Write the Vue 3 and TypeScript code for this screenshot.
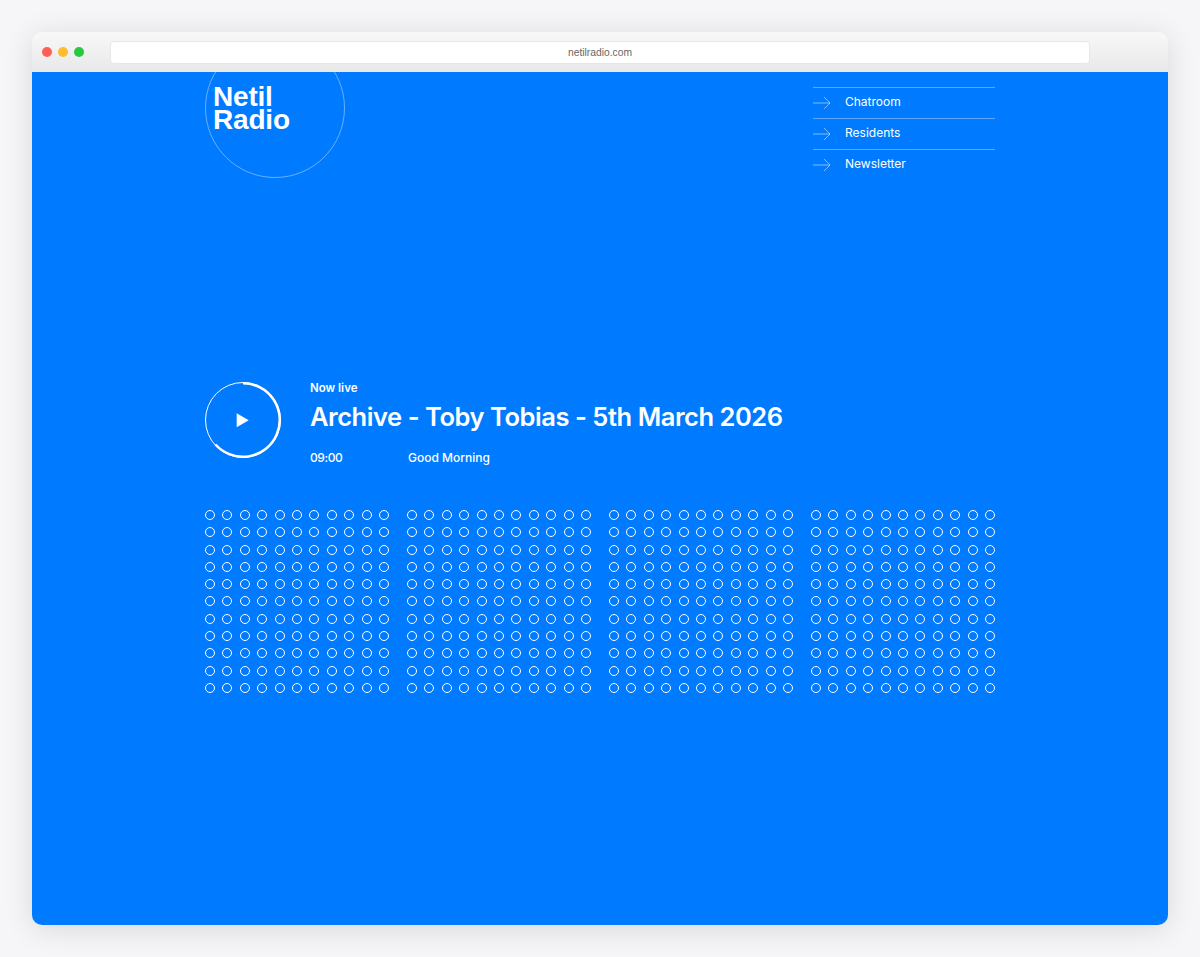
<script setup lang="ts">
const links: string[] = ['Chatroom', 'Residents', 'Newsletter']
const groups: number[] = [0, 1, 2, 3]
const dots: number[] = Array.from({ length: 121 }, (_, i) => i)
</script>

<template>
  <div class="stage">
    <div class="window">
      <div class="chrome">
        <div class="lights">
          <span class="light red"></span>
          <span class="light amber"></span>
          <span class="light green"></span>
        </div>
        <div class="address">netilradio.com</div>
      </div>
      <main class="site">
        <div class="page">
          <header class="top">
            <div class="logo"><span>Netil<br />Radio</span></div>
            <nav class="nav">
              <a v-for="link in links" :key="link" class="nav-row">
                <svg class="arrow" width="18" height="14" viewBox="0 0 18 14" fill="none">
                  <path d="M0 7H17M11 1l6 6-6 6" stroke="#fff" stroke-opacity=".5" stroke-width="1" />
                </svg>
                <span>{{ link }}</span>
              </a>
            </nav>
          </header>

          <section class="hero">
            <svg class="play" width="76" height="76" viewBox="0 0 76 76" fill="none">
              <circle cx="38" cy="38" r="37.5" stroke="#fff" stroke-width="1" />
              <path d="M38 1.200A36.800 36.800 0 1 1 10.500 62.500" stroke="#fff" stroke-width="2.500" />
              <path d="M31.700 31.300V45.300L43.700 38.300Z" fill="#fff" />
            </svg>
            <div class="info">
              <div class="live">Now live</div>
              <h1 class="title">Archive - Toby Tobias - 5th March 2026</h1>
              <div class="meta">
                <span class="time">09:00</span>
                <span>Good Morning</span>
              </div>
            </div>
          </section>

          <section class="groups">
            <div v-for="g in groups" :key="g" class="group">
              <span v-for="d in dots" :key="d" class="dot"></span>
            </div>
          </section>
        </div>
      </main>
    </div>
  </div>
</template>

<style>
html,
body {
  margin: 0;
  background: #f6f6f8;
}
</style>

<style scoped>
.stage {
  width: 1200px;
  height: 957px;
  box-sizing: border-box;
  padding: 32px;
  background: #f6f6f8;
  font-family: Inter, "Liberation Sans", sans-serif;
  overflow: hidden;
}
.window {
  height: 893px;
  display: flex;
  flex-direction: column;
  border-radius: 10px;
  overflow: hidden;
  box-shadow: 0 4px 30px rgba(0, 0, 0, 0.12);
}
.chrome {
  height: 40px;
  flex: none;
  display: flex;
  align-items: center;
  box-sizing: border-box;
  padding: 0 78px 0 10px;
  background: linear-gradient(#f8f8f8, #e8e8e8);
}
.lights {
  display: flex;
  gap: 6px;
  width: 68px;
}
.light {
  width: 10px;
  height: 10px;
  border-radius: 50%;
}
.red { background: #ff5f57; }
.amber { background: #febc2e; }
.green { background: #28c840; }
.address {
  flex: 1;
  height: 23px;
  padding-top: 1px;
  display: flex;
  align-items: center;
  justify-content: center;
  box-sizing: border-box;
  background: #fff;
  border: 1px solid #e6e6e6;
  border-radius: 4px;
  color: #666;
  font-family: "Liberation Sans", sans-serif;
  font-size: 10.3px;
}
.site {
  flex: 1;
  background: #007bff;
  color: #fff;
  overflow: hidden;
}
.page {
  width: 790px;
  margin: 0 auto;
}
.top {
  display: flex;
  justify-content: space-between;
  align-items: flex-start;
}
.logo {
  width: 140px;
  height: 140px;
  margin-top: -34px;
  box-sizing: border-box;
  padding: 46px 0 0 7px;
  border: 1px solid rgba(255, 255, 255, 0.4);
  border-radius: 50%;
  font-family: "Liberation Sans", sans-serif;
  font-size: 28px;
  line-height: 23px;
  font-weight: 700;
  letter-spacing: -0.2px;
}
.nav {
  width: 182px;
  margin-top: 15px;
}
.nav-row {
  height: 31px;
  display: flex;
  align-items: center;
  gap: 14px;
  box-sizing: border-box;
  border-top: 1px solid rgba(255, 255, 255, 0.35);
  padding-bottom: 3px;
  font-size: 12px;
}
.arrow {
  flex: none;
  margin-top: 2px;
}
.hero {
  display: flex;
  gap: 29px;
  margin-top: 202px;
}
.play {
  flex: none;
}
.info {
  margin-top: -2px;
  height: 90px;
}
.live {
  font-size: 11.5px;
  line-height: 16px;
  font-weight: 600;
}
.title {
  margin: 4px 0 0;
  font-size: 25.5px;
  line-height: 34px;
  font-weight: 600;
  letter-spacing: -0.45px;
}
.meta {
  display: flex;
  margin-top: 16px;
  font-size: 12px;
  line-height: 16px;
  font-weight: 500;
}
.time {
  width: 98px;
  letter-spacing: -0.4px;
}
.groups {
  display: grid;
  grid-template-columns: repeat(4, 184px);
  column-gap: 18px;
  margin-top: 40px;
}
.group {
  display: grid;
  grid-template-columns: repeat(11, 10px);
  justify-content: space-between;
  row-gap: 7.3px;
}
.dot {
  width: 10px;
  height: 10px;
  box-sizing: border-box;
  border: 1px solid #fff;
  border-radius: 50%;
}
</style>
